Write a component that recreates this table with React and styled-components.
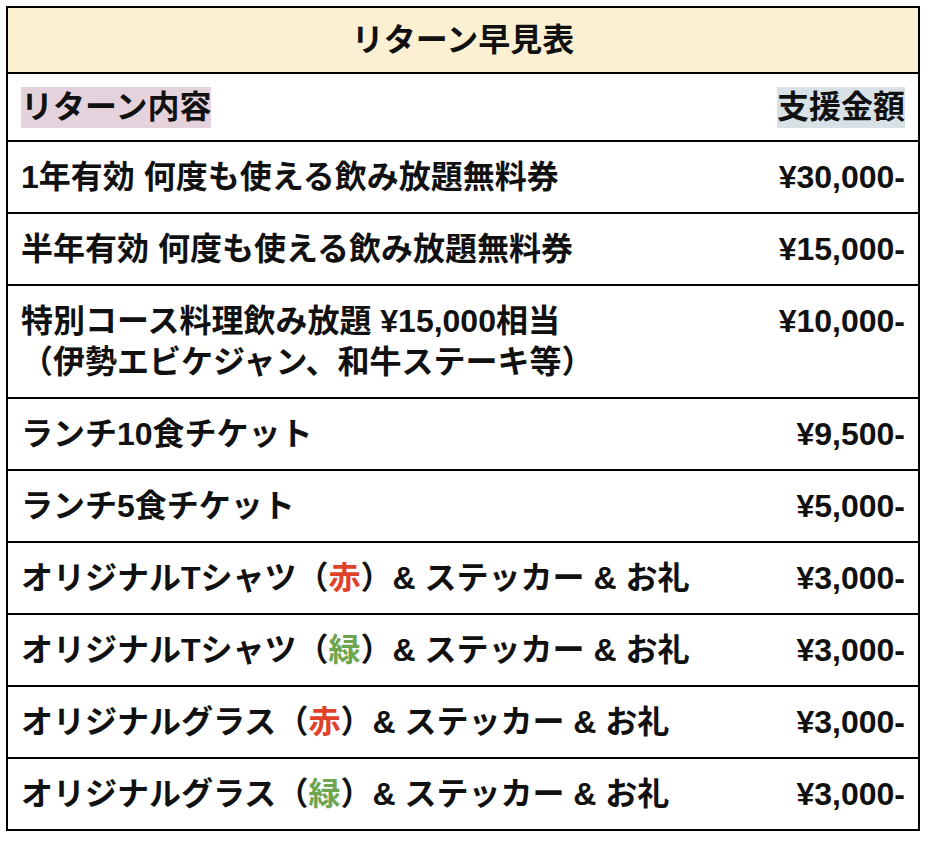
import React from "react";
import styled, { createGlobalStyle } from "styled-components";

const GlobalStyle = createGlobalStyle`
    body {
        margin: 0;
        padding: 6px;
        background: #FFFFFF;
        font-family: "Liberation Sans", "Noto Sans CJK JP", sans-serif;
        color: #111111;
    }
`;

const rewards = [
    { name: ["1年有効 何度も使える飲み放題無料券"], price: "¥30,000-" },
    { name: ["半年有効 何度も使える飲み放題無料券"], price: "¥15,000-" },
    { name: ["特別コース料理飲み放題 ¥15,000相当", "（伊勢エビケジャン、和牛ステーキ等）"], price: "¥10,000-" },
    { name: ["ランチ10食チケット"], price: "¥9,500-" },
    { name: ["ランチ5食チケット"], price: "¥5,000-" },
    { item: "オリジナルTシャツ", color: "赤", price: "¥3,000-" },
    { item: "オリジナルTシャツ", color: "緑", price: "¥3,000-" },
    { item: "オリジナルグラス", color: "赤", price: "¥3,000-" },
    { item: "オリジナルグラス", color: "緑", price: "¥3,000-" },
];

const App = () => {
    return (
        <>
            <GlobalStyle />
            <Table>
                <TitleRow>リターン早見表</TitleRow>
                <Row $top={13} $bottom={12}>
                    <Marker $bg="#E4D3DC">リターン内容</Marker>
                    <Marker $bg="#D8E1E5">支援金額</Marker>
                </Row>
                {rewards.map((r, i) => (
                    <Row key={i}>
                        <Name>
                            {r.name
                                ? r.name.map((line, j) => <div key={j}>{line}</div>)
                                : (
                                    <div>
                                        {r.item}（<Tint $color={r.color === "赤" ? "#E0412B" : "#6DA550"}>{r.color}</Tint>）&amp; ステッカー &amp; お礼
                                    </div>
                                )}
                        </Name>
                        <Price>{r.price}</Price>
                    </Row>
                ))}
            </Table>
        </>
    );
};

export default App;

const Table = styled.div`
    width: 914px;
    box-sizing: border-box;
    border: 2px solid #000000;
    font-weight: 700;
    font-size: 32px;
    line-height: 41px;
`;

const TitleRow = styled.div`
    background: #FBF0D1;
    text-align: center;
    padding: 12px 0 11px;
`;

const Row = styled.div`
    display: flex;
    justify-content: space-between;
    align-items: flex-start;
    border-top: 2px solid #000000;
    padding: ${(p) => p.$top ?? 15}px 13px ${(p) => p.$bottom ?? 14}px;
`;

const Marker = styled.span`
    background: ${(p) => p.$bg};
`;

const Name = styled.div`
    white-space: nowrap;
`;

const Price = styled.div`
    white-space: nowrap;
    text-align: right;
`;

const Tint = styled.span`
    color: ${(p) => p.$color};
`;
